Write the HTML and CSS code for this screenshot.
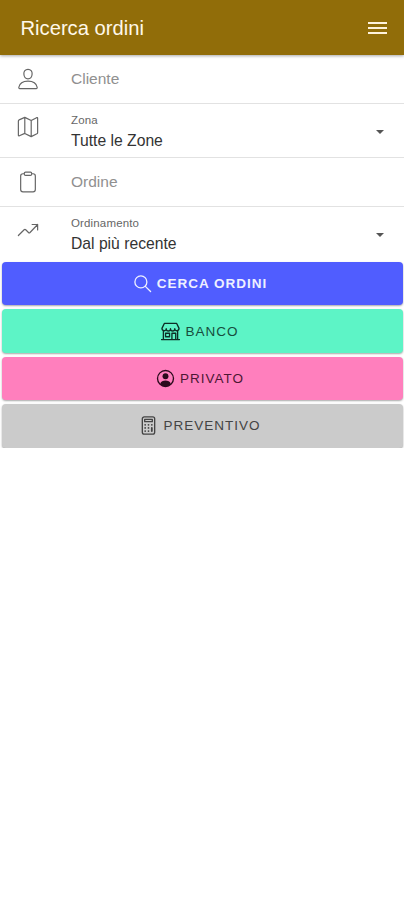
FILE: index.html
```
<!DOCTYPE html>
<html lang="it">
<head>
  <meta charset="UTF-8">
  <title>Ricerca ordini</title>
  <link rel="stylesheet" href="styles.css">
</head>
<body>
  <header class="toolbar">
    <h1>Ricerca ordini</h1>
    <svg class="menu" viewBox="0 0 19 14"><path d="M0 2h19M0 7h19M0 12h19"/></svg>
  </header>

  <main>
    <div class="item">
      <svg class="icon" viewBox="0 0 24 24"><path d="M12 1.5c-3 0-4.7 2.2-4.5 5 .2 3 2 5.3 4.5 5.3s4.300-2.300 4.500-5.300c.2-2.800-1.500-5-4.500-5zM12 14.300c-5 0-9.200 2.500-10 6.700-.1.900.2 1.500 1 1.500h18c.8 0 1.100-.6 1-1.500-.8-4.200-5-6.700-10-6.700z"/></svg>
      <span class="placeholder">Cliente</span>
    </div>
    <div class="item select">
      <svg class="icon" viewBox="0 0 24 24"><path d="M8.500 1.500 2.300 4.200c-.5.200-.8.600-.8 1.200v15.500c0 .7.500 1 1.100.7L8.500 19l7 3.500 6.200-3.100c.5-.3.800-.7.800-1.200V2.500c0-.7-.5-1-1.100-.7L15.500 5zM8.500 1.500V19M15.500 5v17.500"/></svg>
      <div class="field">
        <span class="label">Zona</span>
        <span class="value">Tutte le Zone</span>
      </div>
      <span class="arrow"></span>
    </div>
    <div class="item ordine">
      <svg class="icon" viewBox="0 0 24 24"><path d="M8 3H6.500C5 3 4 4 4 5.500v14.800c0 1.500 1 2.500 2.500 2.500h11c1.500 0 2.500-1 2.500-2.500V5.500C20 4 19 3 17.500 3H16M9.300 1.200h5.400c.8 0 1.300.5 1.300 1.300v1c0 .8-.5 1.300-1.300 1.300H9.300C8.500 4.800 8 4.300 8 3.500v-1c0-.8.500-1.300 1.300-1.300z"/></svg>
      <span class="placeholder">Ordine</span>
    </div>
    <div class="item select last">
      <svg class="icon" viewBox="0 0 24 24"><path d="m1.500 18 6.300-6.300c.5-.5 1.200-.5 1.700 0l3 3c.5.5 1.200.5 1.700 0L22.500 6M16.500 6h6v6"/></svg>
      <div class="field">
        <span class="label">Ordinamento</span>
        <span class="value">Dal più recente</span>
      </div>
      <span class="arrow"></span>
    </div>

    <div class="buttons">
      <button class="btn cerca">
        <svg viewBox="0 0 20 20"><circle cx="8.300" cy="8.300" r="6.300"/><path d="m13 13 5.500 5.500"/></svg>
        <span>CERCA ORDINI</span>
      </button>
      <button class="btn banco">
        <svg viewBox="0 0 20 20"><path d="M3.500 1.500h13l2.500 5.200c0 3.200-4.500 3.400-4.500.3 0 3.300-4.500 3.300-4.500 0 0 3.300-4.500 3.300-4.500 0 0 3.100-4.500 2.900-4.500-.3zM2.500 9.500v9M17.500 9.500v9M.5 18.500h19M4.800 11.800h4.200v3.700H4.800zM11.500 18.500v-6.700h4v6.700"/></svg>
        <span>BANCO</span>
      </button>
      <button class="btn privato">
        <svg viewBox="0 0 20 20"><circle cx="10" cy="10" r="8.400"/><circle class="fill" cx="10" cy="7.600" r="3.100"/><path class="fill" d="M4.300 15.700c.9-2.600 3.200-3.500 5.700-3.500s4.800.9 5.700 3.500c-1.500 1.800-3.500 2.600-5.700 2.600s-4.200-.8-5.700-2.600z"/></svg>
        <span>PRIVATO</span>
      </button>
      <button class="btn preventivo">
        <svg viewBox="0 0 20 20"><rect x="3.500" y="1" width="13" height="18" rx="2"/><rect x="6" y="3.500" width="8" height="2.500"/><path class="keys" d="M6.500 9.300h0M10 9.300h0M13.500 9.300h0M6.500 12.600h0M10 12.600h0M6.500 15.900h0M10 15.900h0M13.500 12.600v3.300"/></svg>
        <span>PREVENTIVO</span>
      </button>
    </div>
  </main>
</body>
</html>
```
FILE: styles.css
```
* { box-sizing: border-box; }
body { margin: 0; background-color: #fff; font-family: "Liberation Sans", Arial, sans-serif; color: #333; }

/* barra in alto */
.toolbar { display: flex; align-items: center; justify-content: space-between; height: 55px; padding: 1px 17px 0 20.500px; background-color: #916d09; box-shadow: 0 1px 3px rgba(0,0,0,0.35); }
.toolbar h1 { margin: 0; font-size: 20.200px; font-weight: normal; color: #fff8ea; }
.menu { width: 19px; height: 14px; fill: none; stroke: #fff3dc; stroke-width: 2.200; }

/* righe del filtro */
.item { display: flex; height: 49px; padding: 0 20px 0 17px; border-bottom: 1px solid #e2e2e2; }
.item.select { height: 54px; }
.item.last { height: 55px; border-bottom: none; }
.icon { flex: none; width: 22px; height: 24px; margin: 12px 32px 0 0; fill: none; stroke: #666; stroke-width: 1.300; stroke-linecap: round; stroke-linejoin: round; }
.select .icon { margin-top: 11px; }
.placeholder { margin-top: 15px; font-size: 15.500px; line-height: 18px; color: #909090; }
.field { display: flex; flex-direction: column; flex: 1; }
.label { margin-top: 10px; font-size: 11.500px; letter-spacing: 0.150px; line-height: 13px; color: #666; }
.value { margin-top: 5px; font-size: 15.700px; line-height: 18px; color: #333; }
.arrow { align-self: flex-start; margin-top: 26px; border: 4.500px solid transparent; border-top-color: #555; border-bottom: none; }

/* pulsanti */
.buttons { display: flex; flex-direction: column; gap: 4px; padding: 0 1px 0 2px; }
.btn { display: flex; align-items: center; justify-content: center; gap: 5px; height: 43.400px; padding: 0 5px 0 0; border: none; border-radius: 4px; font-family: inherit; font-size: 13.500px; letter-spacing: 1px; box-shadow: 0 1px 2px rgba(0,0,0,0.35); }
.btn svg { width: 19px; height: 19px; fill: none; stroke: currentColor; stroke-width: 1.400; stroke-linejoin: round; stroke-linecap: round; }
.btn .fill { fill: currentColor; stroke: none; }
.btn .keys { stroke-width: 1.900; }
.cerca { background-color: #505dff; color: #eef0ff; font-weight: bold; }
.banco { background-color: #5df4c6; color: #174d3d; }
.banco svg { stroke: #0d2e25; }
.privato { background-color: #ff7fbd; color: #4d1734; }
.privato svg { color: #2b0a1c; }
.preventivo { background-color: #cbcbcb; color: #444; }
```
